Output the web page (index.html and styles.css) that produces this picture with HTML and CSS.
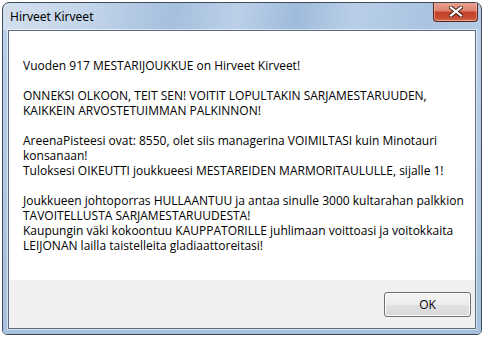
FILE: index.html
```html
<!DOCTYPE html>
<html lang="fi">
<head>
    <meta charset="UTF-8">
    <meta name="viewport" content="width=device-width, initial-scale=1.0">
    <title>Hirveet Kirveet</title>
    <link rel="stylesheet" href="styles.css">
</head>
<body>
    <div class="window">
        <div class="titlebar">
            <span class="title">Hirveet Kirveet</span>
            <div class="close-btn">
                <svg width="14" height="11" viewBox="0 0 14 11">
                    <path d="M2 1.5 L12 9.5 M12 1.5 L2 9.5" stroke="#3a1a14" stroke-width="4" stroke-linecap="square"/>
                    <path d="M2 1.5 L12 9.5 M12 1.5 L2 9.5" stroke="#ffffff" stroke-width="2.2" stroke-linecap="square"/>
                </svg>
            </div>
        </div>
        <div class="frame-body">
            <div class="client">
                <div class="message">
                    <p>Vuoden 917 MESTARIJOUKKUE on Hirveet Kirveet!</p>
                    <p>ONNEKSI OLKOON, TEIT SEN! VOITIT LOPULTAKIN SARJAMESTARUUDEN,<br>KAIKKEIN ARVOSTETUIMMAN PALKINNON!</p>
                    <p>AreenaPisteesi ovat: 8550, olet siis managerina VOIMILTASI kuin Minotauri<br>konsanaan!<br>Tuloksesi OIKEUTTI joukkueesi MESTAREIDEN MARMORITAULULLE, sijalle 1!</p>
                    <p>Joukkueen johtoporras HULLAANTUU ja antaa sinulle 3000 kultarahan palkkion<br>TAVOITELLUSTA SARJAMESTARUUDESTA!<br>Kaupungin väki kokoontuu KAUPPATORILLE juhlimaan voittoasi ja voitokkaita<br>LEIJONAN lailla taistelleita gladiaattoreitasi!</p>
                </div>
                <div class="footer">
                    <button class="ok-btn">OK</button>
                </div>
            </div>
        </div>
    </div>
</body>
</html>
```

FILE: styles.css
```css
body {
    margin: 0;
    background-color: #ffffff;
    font-family: "Open Sans", "Noto Sans", sans-serif;
    font-size: 12px;
    color: #000000;
}

.window {
    margin: 2px 2px 0 2px;
    width: 480px;
    height: 333px;
    box-sizing: border-box;
    border: 1px solid #3f4957;
    border-radius: 7px 7px 5px 5px;
    background: linear-gradient(100deg, #d3dfee 0%, #c3d5ea 16%, #a5bfdd 32%, #bcd0e8 44%, #9fbbdb 55%, #b9cfe7 66%, #a9c3e1 80%, #c0d4ea 100%);
    display: flex;
    flex-direction: column;
    overflow: hidden;
}

.titlebar {
    height: 27px;
    flex-shrink: 0;
    display: flex;
    justify-content: space-between;
    align-items: flex-start;
}

.title {
    margin: 5px 0 0 7px;
    font-family: "Noto Sans", "Open Sans", sans-serif;
    font-size: 12px;
    color: #000000;
}

.close-btn {
    width: 45px;
    height: 20px;
    margin: -1px 3px 0 0;
    box-sizing: border-box;
    border: 1px solid #5a241b;
    border-top: none;
    border-radius: 0 0 4px 4px;
    background: linear-gradient(#eaa493 0%, #de8570 45%, #c5412a 55%, #c64e33 85%, #d87659 100%);
    box-shadow: inset 0 0 0 1px rgba(255, 220, 210, 0.45);
    display: flex;
    justify-content: center;
    align-items: center;
}

.frame-body {
    flex: 1;
    padding: 0 5px 5px 5px;
    display: flex;
    background: linear-gradient(#bad0e9, #a6c0dd);
}

.client {
    flex: 1;
    border: 1px solid #5d6b7c;
    box-shadow: 0 0 0 1px rgba(255, 255, 255, 0.55);
    display: flex;
    flex-direction: column;
    background-color: #f0f0f0;
}

.message {
    height: 249px;
    box-sizing: border-box;
    padding: 27px 0 0 14px;
    background-color: #ffffff;
    line-height: 15px;
}

.message p {
    margin: 0 0 15px 0;
}

.footer {
    flex: 1;
    display: flex;
    justify-content: flex-end;
    align-items: center;
    padding-right: 4px;
}

.ok-btn {
    width: 87px;
    height: 25px;
    border: 1px solid #707070;
    border-radius: 3px;
    background: linear-gradient(#f4f4f4 0%, #ececec 50%, #e2e2e2 51%, #d8d8d8 100%);
    box-shadow: inset 0 0 0 1px #fcfcfc;
    font-family: "Open Sans", "Noto Sans", sans-serif;
    font-size: 12px;
    color: #000000;
    padding: 0;
}
```
